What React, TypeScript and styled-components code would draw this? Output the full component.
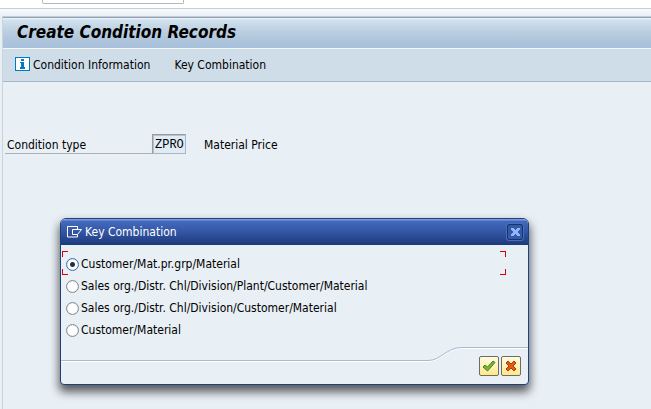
import React, { useState } from "react";
import styled, { createGlobalStyle } from "styled-components";

const GlobalStyle = createGlobalStyle`
  *, *::before, *::after { box-sizing: border-box; }
  html, body, #root { height: 100%; }
  body {
    margin: 0;
    overflow: hidden;
    background: #e8eff5;
    color: #000;
    font: 12px/16px "DejaVu Sans Condensed", Tahoma, sans-serif;
  }
  button, input { font: inherit; color: inherit; }
`;

const Page = styled.div`
  position: relative;
  display: flex;
  flex-direction: column;
  min-height: 100%;
`;

const CommandBar = styled.header`
  height: 9px;
  padding-left: 42px;
  background: #fff;
  border-bottom: 1px solid #c5cfdc;
`;

const CommandField = styled.input`
  display: block;
  width: 142px;
  height: 4px;
  padding: 0;
  border: 1px solid #b5b8bb;
  border-top: 0;
  border-radius: 0 0 2px 2px;
  background: #fff;
`;

const Strip = styled.div`
  height: 7px;
  background: linear-gradient(#f8fafd, #e9f0f7);
`;

const Screen = styled.main`
  flex: 1;
  margin-left: 2px;
  border-left: 1px solid #cbd3dd;
`;

const Header = styled.div`
  border-top: 1px solid #c3ccd8;
  border-bottom: 1px solid #a7b7c5;
  background: #cfdde8;
`;

const TitleBar = styled.div`
  height: 32px;
  padding: 4px 14px 0;
  border-top: 1px solid #93a3b5;
  border-bottom: 1px solid #f3f8fc;
  background: linear-gradient(#e6f0f7 0 1px, #d0e1ee 2px, #b9cddf 50%, #adc3dc 80%, #a9c1da);
`;

const Title = styled.h1`
  margin: 0;
  font-size: 17px;
  line-height: 20px;
  font-weight: bold;
  font-style: italic;
`;

const Toolbar = styled.div`
  display: flex;
  align-items: center;
  gap: 24px;
  height: 32px;
  padding-left: 12px;
`;

const ToolButton = styled.button`
  display: flex;
  align-items: center;
  gap: 3px;
  padding: 0;
  border: 0;
  background: none;
`;

const InfoFrame = styled.span`
  display: flex;
  padding-bottom: 2px;
`;

const Form = styled.div`
  display: flex;
  align-items: flex-end;
  padding: 52px 2px 0;
`;

const FieldLabel = styled.label`
  width: 147px;
  height: 17px;
  padding-left: 2px;
  border-bottom: 1px solid #aeb2b6;
`;

const TypeField = styled.input`
  width: 34px;
  height: 20px;
  padding: 1px 0 0 2px;
  border: 1px solid #aeb5bc;
  border-top-color: #959ca3;
  border-left-color: #959ca3;
  background: #dfebf5;
  box-shadow: inset 1px 1px #b9c1c9;
  && { font-family: "Liberation Mono", monospace; }
`;

const FieldText = styled.span`
  height: 17px;
  margin-left: 18px;
`;

const Dialog = styled.section`
  position: absolute;
  left: 60px;
  top: 218px;
  width: 469px;
  border: 1px solid #203f7e;
  border-radius: 6px 6px 4px 4px;
  background: #e8eff5;
  box-shadow: 0 6px 10px 1px rgba(0, 0, 0, 0.62);
  overflow: hidden;
`;

const DialogTitle = styled.div`
  display: flex;
  align-items: center;
  gap: 3px;
  height: 26px;
  padding: 0 5px 0 6px;
  color: #fff;
  background: linear-gradient(#7e9bd6 0 1px, #4569bd 2px, #3558a8 45%, #1c397c);
`;

const DialogName = styled.h2`
  flex: 1;
  margin: 0;
  font-size: 12px;
  font-weight: normal;
`;

const CloseButton = styled.button`
  display: grid;
  place-items: center;
  width: 16px;
  height: 16px;
  padding: 0;
  border: 1px solid #17346e;
  border-radius: 2px;
  background: #3459a5;
  box-shadow: 0 0 0 1px #4b6db5;
`;

const Options = styled.div`
  display: grid;
  padding: 8px 22px 6px 1px;
`;

const Option = styled.label`
  position: relative;
  display: flex;
  align-items: center;
  gap: 2px;
  height: 22px;
  padding-left: 4px;
`;

const Corner = styled.i<{ $right?: boolean; $bottom?: boolean }>`
  position: absolute;
  width: 6px;
  height: 6px;
  ${(p) => (p.$right ? "right: 0; border-right: 1px solid #d9000d;" : "left: 0; border-left: 1px solid #d9000d;")}
  ${(p) => (p.$bottom ? "bottom: 0; border-bottom: 1px solid #d9000d;" : "top: -2px; border-top: 1px solid #d9000d;")}
`;

const Radio = styled.input`
  appearance: none;
  width: 13px;
  height: 13px;
  margin: 0;
  border: 1px solid #868b90;
  border-radius: 50%;
  background: #fff;
  box-shadow: inset 0 0 1px #9b9fa3;
  outline: none;
  &:checked {
    border-color: #4474a8;
    background: radial-gradient(circle, #262f45 0 2px, #fff 3px);
    box-shadow: inset 0 0 1px #5f8fc0;
  }
`;

const Footer = styled.footer`
  display: flex;
  height: 37px;
`;

const LowRule = styled.div`
  flex: 1;
  height: 15px;
  border-bottom: 1px solid #fff;
  box-shadow: inset 0 -1px #a9b9d1;
`;

const Actions = styled.div`
  display: flex;
  gap: 2px;
  padding: 8px 7px 0 17px;
  border-top: 1px solid #a9b9d1;
  box-shadow: inset 0 1px #fff;
`;

const ActionButton = styled.button`
  display: grid;
  place-items: center;
  width: 20px;
  height: 20px;
  padding: 0;
  border: 1px solid #706b62;
  border-radius: 2px;
  background: linear-gradient(#fffbe0, #fff3b8 50%, #ffe888);
`;

const choices = [
  "Customer/Mat.pr.grp/Material",
  "Sales org./Distr. Chl/Division/Plant/Customer/Material",
  "Sales org./Distr. Chl/Division/Customer/Material",
  "Customer/Material",
];

const InfoIcon = () => (
  <svg width="15" height="14" viewBox="0 0 15 14" aria-hidden="true" shapeRendering="crispEdges">
    <rect x="0.5" y="0.5" width="14" height="13" fill="#fff" stroke="#007cc0" />
    <path d="M6 2h3v2H6zM5 5h4v5h1v2H5v-2h1V6H5z" fill="#007cc0" />
  </svg>
);

const WindowIcon = () => (
  <svg width="15" height="12" viewBox="0 0 15 12" fill="none" stroke="#fff" aria-hidden="true">
    <path d="M10.500 3V.5H.5v10.500h10V8.500M10.500 3.500H5.500v5h5M8 3.500h6.500L10.500 8.500" />
  </svg>
);

const CloseIcon = () => (
  <svg width="9" height="8" viewBox="0 0 9 8" fill="#91b6ff" aria-hidden="true" shapeRendering="crispEdges">
    <path d="M0 0h3v1h1v1h1V1h1V0h3v2H8v1H7v2h1v1h1v2H6V7H5V6H4v1H3v1H0V6h1V5h1V3H1V2H0z" />
  </svg>
);

const CheckIcon = () => (
  <svg width="14" height="13" viewBox="0 0 14 13" aria-hidden="true">
    <path d="M1 7l2-2 2.500 2L11 1l2 1.500L5.500 11z" fill="#77bd21" stroke="#447b3c" strokeLinejoin="round" />
  </svg>
);

const CrossIcon = () => (
  <svg width="12" height="12" viewBox="0 0 12 12" aria-hidden="true">
    <path d="M1 3l2-2 3 3 3-3 2 2-3 3 3 3-2 2-3-3-3 3-2-2 3-3z" fill="#e95a0c" stroke="#a93b12" strokeLinejoin="round" />
  </svg>
);

const RuleCurve = () => (
  <svg width="34" height="16" viewBox="0 0 34 16" fill="none" aria-hidden="true">
    <path d="M0 14.500C13 14.500 18 1.500 34 1.500" stroke="#fff" />
    <path d="M0 13.500C13 13.500 18 .5 34 .5" stroke="#a9b9d1" />
  </svg>
);

export default function App() {
  const [selected, setSelected] = useState(0);
  return (
    <>
      <GlobalStyle />
      <Page>
        <CommandBar>
          <CommandField aria-label="Command" />
        </CommandBar>
        <Strip />
        <Screen>
          <Header>
            <TitleBar>
              <Title>Create Condition Records</Title>
            </TitleBar>
            <Toolbar>
              <ToolButton type="button">
                <InfoFrame><InfoIcon /></InfoFrame>
                Condition Information
              </ToolButton>
              <ToolButton type="button">Key Combination</ToolButton>
            </Toolbar>
          </Header>
          <Form>
            <FieldLabel htmlFor="condition-type">Condition type</FieldLabel>
            <TypeField id="condition-type" defaultValue="ZPRO" />
            <FieldText>Material Price</FieldText>
          </Form>
        </Screen>
        <Dialog role="dialog" aria-labelledby="dialog-name">
          <DialogTitle>
            <WindowIcon />
            <DialogName id="dialog-name">Key Combination</DialogName>
            <CloseButton type="button" aria-label="Close"><CloseIcon /></CloseButton>
          </DialogTitle>
          <Options role="radiogroup" aria-labelledby="dialog-name">
            {choices.map((text, i) => (
              <Option key={text}>
                {selected === i && (
                  <>
                    <Corner />
                    <Corner $right />
                    <Corner $bottom />
                    <Corner $right $bottom />
                  </>
                )}
                <Radio type="radio" name="combination" checked={selected === i} onChange={() => setSelected(i)} />
                {text}
              </Option>
            ))}
          </Options>
          <Footer>
            <LowRule />
            <RuleCurve />
            <Actions>
              <ActionButton type="button" aria-label="Continue"><CheckIcon /></ActionButton>
              <ActionButton type="button" aria-label="Cancel"><CrossIcon /></ActionButton>
            </Actions>
          </Footer>
        </Dialog>
      </Page>
    </>
  );
}
